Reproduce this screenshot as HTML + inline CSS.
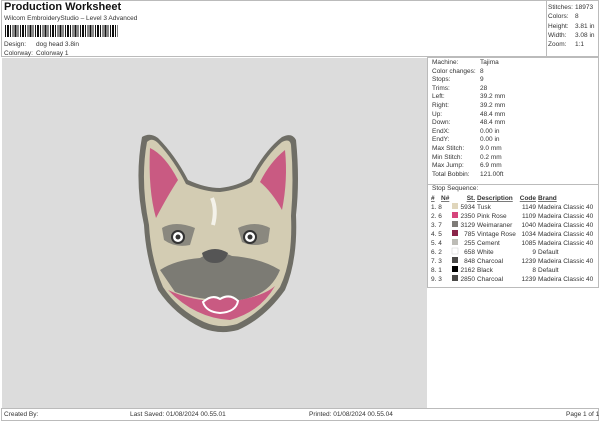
<!DOCTYPE html>
<html><head><style>
*{margin:0;padding:0;box-sizing:border-box}
body{width:600px;height:424px;background:#fff;font-family:"Liberation Sans",Arial,sans-serif;color:#333;position:relative;overflow:hidden;font-size:6.5px}
.a{position:absolute;white-space:nowrap}
.bx{position:absolute;border:1px solid #bbb}
</style></head><body>
<div class="bx" style="left:1px;top:0;width:598px;height:57px"></div>
<div class="bx" style="left:546px;top:0;width:53px;height:57px"></div>
<div class="a" style="left:4px;top:1px;font-size:11px;font-weight:bold;color:#111">Production Worksheet</div>
<div class="a" style="left:4px;top:15px">Wilcom EmbroideryStudio – Level 3 Advanced</div>
<div class="a" style="left:5px;top:25px;width:113px;height:12px;background:repeating-linear-gradient(90deg,#111 0 1px,#fff 1px 2px,#111 2px 4px,#fff 4px 5px,#111 5px 6px,#fff 6px 7.5px)"></div>
<div class="a" style="left:4px;top:41px">Design:</div><div class="a" style="left:36px;top:41px">dog head 3.8in</div>
<div class="a" style="left:4px;top:50px">Colorway:</div><div class="a" style="left:36px;top:50px">Colorway 1</div>
<div class="a" style="left:548px;top:3px;line-height:9.3px">Stitches:<br>Colors:<br>Height:<br>Width:<br>Zoom:</div>
<div class="a" style="left:575px;top:3px;line-height:9.3px">18973<br>8<br>3.81 in<br>3.08 in<br>1:1</div>
<div class="a" style="left:2px;top:58px;width:425px;height:350px;background:#dcdcdc"></div>
<div class="bx" style="left:427px;top:57px;width:172px;height:231px"></div>
<div class="a" style="left:432px;top:59px;line-height:8.6px">Machine:<br>Color changes:<br>Stops:<br>Trims:<br>Left:<br>Right:<br>Up:<br>Down:<br>EndX:<br>EndY:<br>Max Stitch:<br>Min Stitch:<br>Max Jump:<br>Total Bobbin:</div>
<div class="a" style="left:480px;top:59px;line-height:8.6px">Tajima<br>8<br>9<br>28<br>39.2 mm<br>39.2 mm<br>48.4 mm<br>48.4 mm<br>0.00 in<br>0.00 in<br>9.0 mm<br>0.2 mm<br>6.9 mm<br>121.00ft</div>
<div class="a" style="left:427px;top:184px;width:172px;border-top:1px solid #bbb"></div>
<div class="a" style="left:432px;top:185px">Stop Sequence:</div>
<svg class="a" style="left:428px;top:192px" width="171" height="96" font-family="Liberation Sans,Arial,sans-serif" font-size="6.5" fill="#333">
<g font-weight="bold" text-decoration="underline"><text x="3" y="8">#</text><text x="13" y="8">N#</text><text x="47" y="8" text-anchor="end">St.</text><text x="49" y="8">Description</text><text x="108" y="8" text-anchor="end">Code</text><text x="110" y="8">Brand</text></g>
<text x="3" y="17">1. 8</text><rect x="24" y="11" width="6" height="6" fill="#e0d6bc"/><text x="47" y="17" text-anchor="end">5934</text><text x="49" y="17">Tusk</text><text x="108" y="17" text-anchor="end">1149</text><text x="110" y="17">Madeira Classic 40</text>
<text x="3" y="26">2. 6</text><rect x="24" y="20" width="6" height="6" fill="#d6457c"/><text x="47" y="26" text-anchor="end">2350</text><text x="49" y="26">Pink Rose</text><text x="108" y="26" text-anchor="end">1109</text><text x="110" y="26">Madeira Classic 40</text>
<text x="3" y="35">3. 7</text><rect x="24" y="29" width="6" height="6" fill="#7f7c78"/><text x="47" y="35" text-anchor="end">3129</text><text x="49" y="35">Weimaraner</text><text x="108" y="35" text-anchor="end">1040</text><text x="110" y="35">Madeira Classic 40</text>
<text x="3" y="44">4. 5</text><rect x="24" y="38" width="6" height="6" fill="#8a2448"/><text x="47" y="44" text-anchor="end">785</text><text x="49" y="44">Vintage Rose</text><text x="108" y="44" text-anchor="end">1034</text><text x="110" y="44">Madeira Classic 40</text>
<text x="3" y="53">5. 4</text><rect x="24" y="47" width="6" height="6" fill="#bdbcb6"/><text x="47" y="53" text-anchor="end">255</text><text x="49" y="53">Cement</text><text x="108" y="53" text-anchor="end">1085</text><text x="110" y="53">Madeira Classic 40</text>
<text x="3" y="62">6. 2</text><rect x="24" y="56" width="6" height="6" fill="#fff" stroke="#ccc" stroke-width=".5"/><text x="47" y="62" text-anchor="end">658</text><text x="49" y="62">White</text><text x="108" y="62" text-anchor="end">9</text><text x="110" y="62">Default</text>
<text x="3" y="71">7. 3</text><rect x="24" y="65" width="6" height="6" fill="#4a4947"/><text x="47" y="71" text-anchor="end">848</text><text x="49" y="71">Charcoal</text><text x="108" y="71" text-anchor="end">1239</text><text x="110" y="71">Madeira Classic 40</text>
<text x="3" y="80">8. 1</text><rect x="24" y="74" width="6" height="6" fill="#000"/><text x="47" y="80" text-anchor="end">2162</text><text x="49" y="80">Black</text><text x="108" y="80" text-anchor="end">8</text><text x="110" y="80">Default</text>
<text x="3" y="89">9. 3</text><rect x="24" y="83" width="6" height="6" fill="#4a4947"/><text x="47" y="89" text-anchor="end">2850</text><text x="49" y="89">Charcoal</text><text x="108" y="89" text-anchor="end">1239</text><text x="110" y="89">Madeira Classic 40</text>
</svg>
<svg class="a" style="left:120px;top:120px" width="200" height="230" viewBox="0 0 200 230">
<path d="M22 17 Q30 12 38 18 Q55 35 68 60 Q85 68 100 68 Q118 66 130 58 Q145 30 162 17 Q172 12 176 20 Q180 60 176 95 Q178 140 165 170 Q145 198 118 210 Q100 215 82 208 Q55 195 38 170 Q26 140 24 105 Q14 60 22 17Z" fill="#6f6e66"/>
<path d="M27 22 Q32 17 38 23 Q54 40 66 64 Q85 72 100 72 Q118 70 132 62 Q146 35 162 22 Q170 18 171 25 Q174 60 171 96 Q173 140 160 167 Q142 192 117 204 Q100 209 84 202 Q58 190 43 167 Q31 140 29 105 Q20 60 27 22Z" fill="#d3ccb3"/>
<path d="M30 28 Q45 35 58 60 Q48 75 36 98 Q28 70 30 28Z" fill="#c95a82"/>
<path d="M165 30 Q150 42 140 62 Q152 72 162 90 Q168 60 165 30Z" fill="#c95a82"/>
<path d="M40 150 Q55 140 80 138 Q95 128 112 136 Q140 138 160 150 Q150 175 120 180 Q85 182 55 172Z" fill="#7c7b74"/>
<path d="M48 170 Q80 185 120 180 Q145 175 155 166 Q140 192 110 200 Q75 198 48 170Z" fill="#c95a82"/>
<path d="M83 182 Q92 174 100 179 Q110 173 118 181 Q116 192 100 193 Q86 192 83 182Z" fill="#c95a82" stroke="#fff" stroke-width="2"/>
<path d="M42 108 Q55 100 75 108 L70 125 Q55 128 44 120Z" fill="#8a887f"/>
<path d="M118 108 Q135 100 150 108 L148 122 Q135 128 122 122Z" fill="#8a887f"/>
<circle cx="58" cy="117" r="6" fill="#fff" stroke="#333" stroke-width="2"/><circle cx="58" cy="117" r="2.5" fill="#333"/>
<circle cx="130" cy="117" r="6" fill="#fff" stroke="#333" stroke-width="2"/><circle cx="130" cy="117" r="2.5" fill="#333"/>
<path d="M82 133 Q95 125 108 133 Q105 143 95 143 Q84 143 82 133Z" fill="#555"/>
<path d="M92 78 Q97 90 93 105" stroke="#f4f2ea" stroke-width="4" fill="none"/>
</svg>
<div class="bx" style="left:1px;top:408px;width:598px;height:13px"></div>
<div class="a" style="left:4px;top:411px">Created By:</div>
<div class="a" style="left:130px;top:411px">Last Saved: 01/08/2024 00.55.01</div>
<div class="a" style="left:309px;top:411px">Printed: 01/08/2024 00.55.04</div>
<div class="a" style="left:566px;top:411px">Page 1 of 1</div>
</body></html>
